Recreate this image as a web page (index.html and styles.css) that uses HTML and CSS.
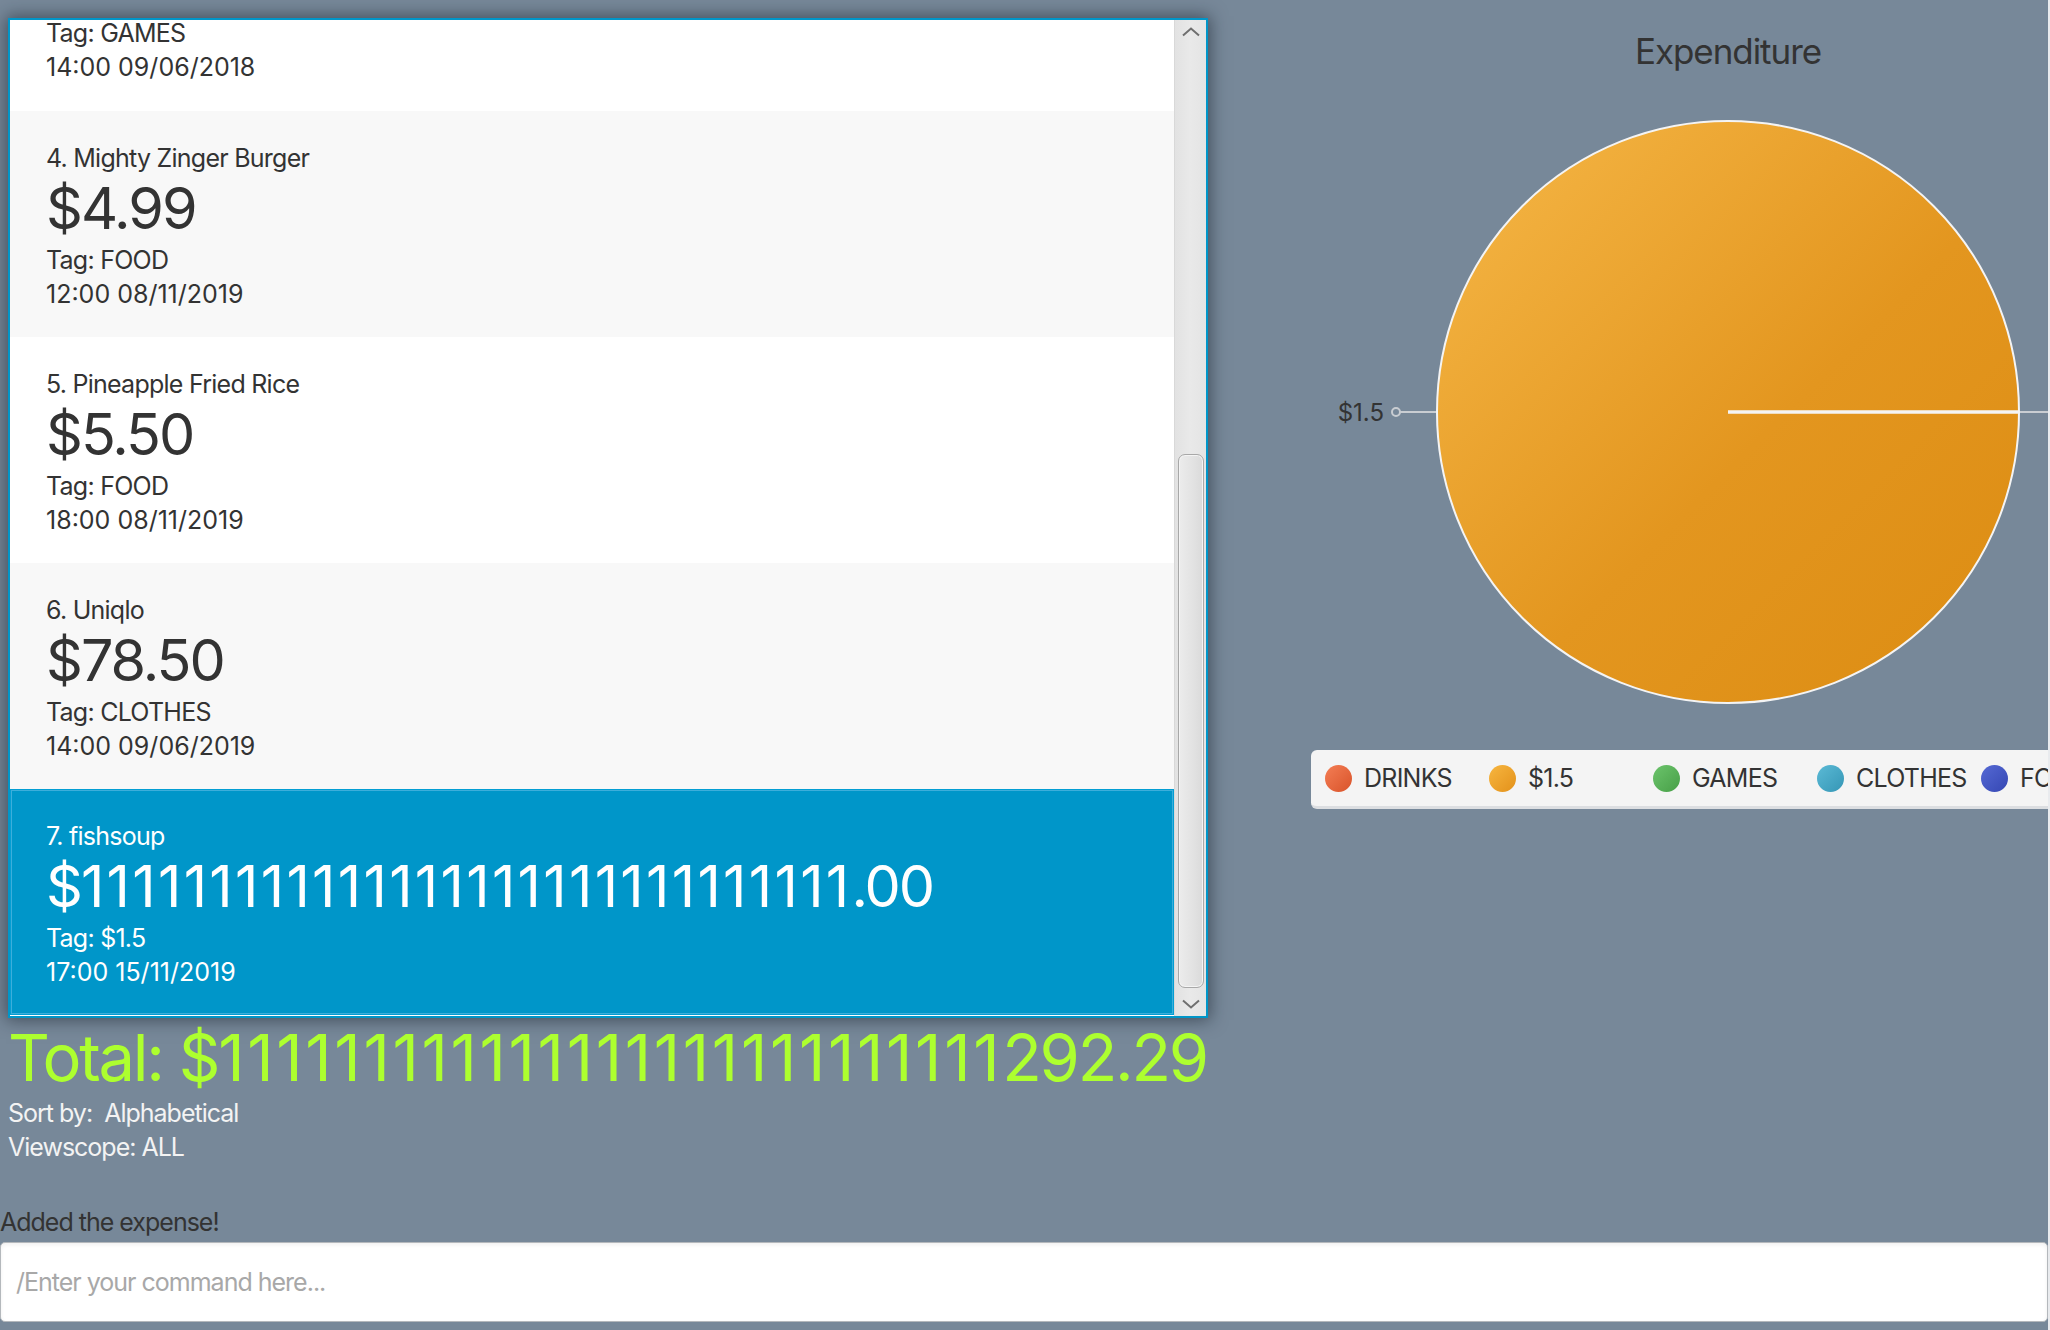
FILE: index.html
```html
<!DOCTYPE html>
<html lang="en">
<head>
<meta charset="utf-8">
<title>Expense Tracker</title>
<link rel="stylesheet" href="styles.css">
</head>
<body>
<div class="app">
  <div class="top">
    <div class="left">
      <div class="panel">
        <div class="viewport">
          <div class="cell cell-partial">
            <div class="cell-line">Tag: GAMES</div>
            <div class="cell-line cell-date">14:00 09/06/2018</div>
          </div>
          <div class="cell cell-alt">
            <div class="cell-line">4. Mighty Zinger Burger</div>
            <div class="cell-price">$4.99</div>
            <div class="cell-line">Tag: FOOD</div>
            <div class="cell-line cell-date">12:00 08/11/2019</div>
          </div>
          <div class="cell">
            <div class="cell-line">5. Pineapple Fried Rice</div>
            <div class="cell-price">$5.50</div>
            <div class="cell-line">Tag: FOOD</div>
            <div class="cell-line cell-date">18:00 08/11/2019</div>
          </div>
          <div class="cell cell-alt">
            <div class="cell-line">6. Uniqlo</div>
            <div class="cell-price">$78.50</div>
            <div class="cell-line">Tag: CLOTHES</div>
            <div class="cell-line cell-date">14:00 09/06/2019</div>
          </div>
          <div class="cell cell-selected">
            <div class="cell-line">7. fishsoup</div>
            <div class="cell-price">$<span class="run">111111111111111111111111111111</span>.00</div>
            <div class="cell-line">Tag: $1.5</div>
            <div class="cell-line cell-date">17:00 15/11/2019</div>
          </div>
        </div>
        <div class="scrollbar">
          <div class="sb-btn">
            <svg width="20" height="10" viewBox="0 0 20 10"><path d="M2 8.5 L10 1.5 L18 8.5" fill="none" stroke="#6f6f6f" stroke-width="2"/></svg>
          </div>
          <div class="sb-track">
            <div class="sb-thumb"></div>
          </div>
          <div class="sb-btn">
            <svg width="20" height="10" viewBox="0 0 20 10"><path d="M2 1.5 L10 8.5 L18 1.5" fill="none" stroke="#6f6f6f" stroke-width="2"/></svg>
          </div>
        </div>
      </div>
      <div class="total">Total: $<span class="run">111111111111111111111111111</span>292.29</div>
      <div class="info">Sort by:  Alphabetical</div>
      <div class="info">Viewscope: ALL</div>
    </div>
    <div class="chart">
      <div class="chart-title">Expenditure</div>
      <svg class="pie" width="1040" height="676" viewBox="0 0 1040 676">
        <defs>
          <linearGradient id="pieGrad" x1="0" y1="0" x2="1" y2="1">
            <stop offset="0" stop-color="#f6b848"/>
            <stop offset="0.55" stop-color="#e3961f"/>
            <stop offset="1" stop-color="#dc8c12"/>
          </linearGradient>
        </defs>
        <line x1="192" y1="338" x2="229" y2="338" stroke="#c9cdd2" stroke-width="2"/>
        <circle cx="188" cy="338" r="4" fill="none" stroke="#c9cdd2" stroke-width="2"/>
        <text x="176" y="346.5" text-anchor="end" class="pie-label">$1.5</text>
        <line x1="811" y1="338" x2="1040" y2="338" stroke="#c9cdd2" stroke-width="2"/>
        <circle cx="520" cy="338" r="291" fill="url(#pieGrad)" stroke="#f4f4f4" stroke-width="2"/>
        <line x1="520" y1="338" x2="810" y2="338" stroke="#f4f4f4" stroke-width="3.5"/>
      </svg>
      <div class="legend">
        <div class="legend-item"><span class="dot dot-drinks"></span>DRINKS</div>
        <div class="legend-item"><span class="dot dot-other"></span>$1.5</div>
        <div class="legend-item"><span class="dot dot-games"></span>GAMES</div>
        <div class="legend-item"><span class="dot dot-clothes"></span>CLOTHES</div>
        <div class="legend-item"><span class="dot dot-food"></span>FOOD</div>
      </div>
    </div>
  </div>
  <div class="result">Added the expense!</div>
  <input class="command" type="text" placeholder="/Enter your command here...">
</div>
</body>
</html>
```
FILE: styles.css
```css
html {
  background: #e9ebee;
}
body {
  margin: 0;
  width: 2050px;
  height: 1330px;
  overflow: hidden;
  font-family: Inter, Roboto, "Liberation Sans", Arial, sans-serif;
}
.app {
  width: 2048px;
  height: 1330px;
  background: #778899;
  overflow: hidden;
  display: flex;
  flex-direction: column;
}
.top {
  height: 1205px;
  display: flex;
  flex-shrink: 0;
}
.left {
  flex: 0 0 1208px;
  padding: 18px 0 0 8px;
  box-sizing: border-box;
}
.panel {
  width: 1200px;
  height: 1000px;
  box-sizing: border-box;
  border: 2px solid #0096c9;
  background: #ffffff;
  display: flex;
  box-shadow: 0 0 16px 2px rgba(20, 30, 40, 0.55);
}
.viewport {
  flex: 1;
  overflow: hidden;
  display: flex;
  flex-direction: column;
}
.cell {
  flex: 0 0 226px;
  min-height: 0;
  box-sizing: border-box;
  padding: 30px 0 0 36px;
  background: #ffffff;
  color: #333333;
  display: flex;
  flex-direction: column;
}
.cell-partial {
  flex: 0 0 91px;
  padding: 0 0 27px 36px;
  justify-content: flex-end;
  overflow: hidden;
}
.cell-alt {
  background: #f8f8f8;
}
.cell-selected {
  background: #0096c9;
  color: #ffffff;
  box-shadow: inset 0 0 0 1px #039ed3, inset 0 0 0 2px #3caedb;
}
.cell-line {
  font-size: 25px;
  line-height: 34px;
  letter-spacing: -0.03em;
  white-space: nowrap;
}
.cell-date {
  letter-spacing: 0;
}
.cell-price {
  font-size: 57.5px;
  line-height: 66px;
  margin-bottom: 1.5px;
  letter-spacing: -0.035em;
  white-space: nowrap;
}
.run {
  letter-spacing: 0.04em;
}
.scrollbar {
  flex: 0 0 32px;
  display: flex;
  flex-direction: column;
  background: linear-gradient(to right, #cfcfcf 0, #e2e2e2 1px, #e9e9e9 50%, #e4e4e4 100%);
}
.sb-btn {
  height: 24px;
  display: flex;
  align-items: center;
  justify-content: center;
  padding-left: 1px;
}
.sb-btn svg {
  display: block;
}
.sb-track {
  flex: 1;
  padding: 410px 2px 0 4px;
}
.sb-thumb {
  height: 534px;
  box-sizing: border-box;
  border: 1px solid #a8a8a8;
  border-radius: 7px;
  background: linear-gradient(to right, #ececec, #e2e2e2 60%, #dadada);
  box-shadow: inset 0 0 0 1px #f4f4f4;
}
.total {
  margin-top: 2px;
  font-size: 65px;
  line-height: 75px;
  letter-spacing: -0.035em;
  color: #adff2f;
  white-space: nowrap;
}
.info {
  font-size: 25px;
  line-height: 34px;
  letter-spacing: -0.04em;
  color: #f3f3f3;
  white-space: pre;
}
.total + .info {
  margin-top: 1px;
}
.chart {
  flex: 0 0 1040px;
  padding-top: 29px;
  box-sizing: border-box;
}
.chart-title {
  font-size: 35px;
  line-height: 44px;
  letter-spacing: -0.03em;
  text-align: center;
  color: #333333;
}
.chart-title + .pie {
  margin-top: 1px;
}
.pie {
  display: block;
}
.pie-label {
  font-family: Inter, Roboto, "Liberation Sans", Arial, sans-serif;
  font-size: 24px;
  fill: #333333;
}
.legend {
  width: 834px;
  height: 59px;
  margin: 0 auto;
  box-sizing: border-box;
  padding-left: 14px;
  background: #f4f4f4;
  border-radius: 6px;
  border-bottom: 3px solid #dcdee1;
  display: grid;
  grid-template-columns: repeat(5, 164px);
  align-items: center;
}
.legend-item {
  display: flex;
  align-items: center;
  gap: 12px;
  font-size: 25px;
  letter-spacing: -0.03em;
  color: #333333;
  white-space: nowrap;
}
.dot {
  width: 27px;
  height: 27px;
  border-radius: 50%;
  flex-shrink: 0;
}
.dot-drinks {
  background: linear-gradient(135deg, #f47e55, #d9532a);
}
.dot-other {
  background: linear-gradient(135deg, #f7b640, #e3911a);
}
.dot-games {
  background: linear-gradient(135deg, #6cc46c, #479f47);
}
.dot-clothes {
  background: linear-gradient(135deg, #5bbad6, #3596b5);
}
.dot-food {
  background: linear-gradient(135deg, #5569d4, #3547b3);
}
.result {
  font-size: 25px;
  line-height: 34px;
  letter-spacing: -0.04em;
  color: #333333;
}
.command {
  display: block;
  margin: 3px 0 0 0;
  width: 2048px;
  height: 80px;
  box-sizing: border-box;
  border: 1px solid #b4b8bc;
  border-radius: 5px;
  background: #ffffff;
  box-shadow: inset 0 2px 4px rgba(0, 0, 0, 0.06);
  padding: 0 0 0 15px;
  font-family: Inter, Roboto, "Liberation Sans", Arial, sans-serif;
  font-size: 25px;
  letter-spacing: -0.04em;
  color: #333333;
  outline: none;
}
.command::placeholder {
  color: #a8a8a8;
}
```
